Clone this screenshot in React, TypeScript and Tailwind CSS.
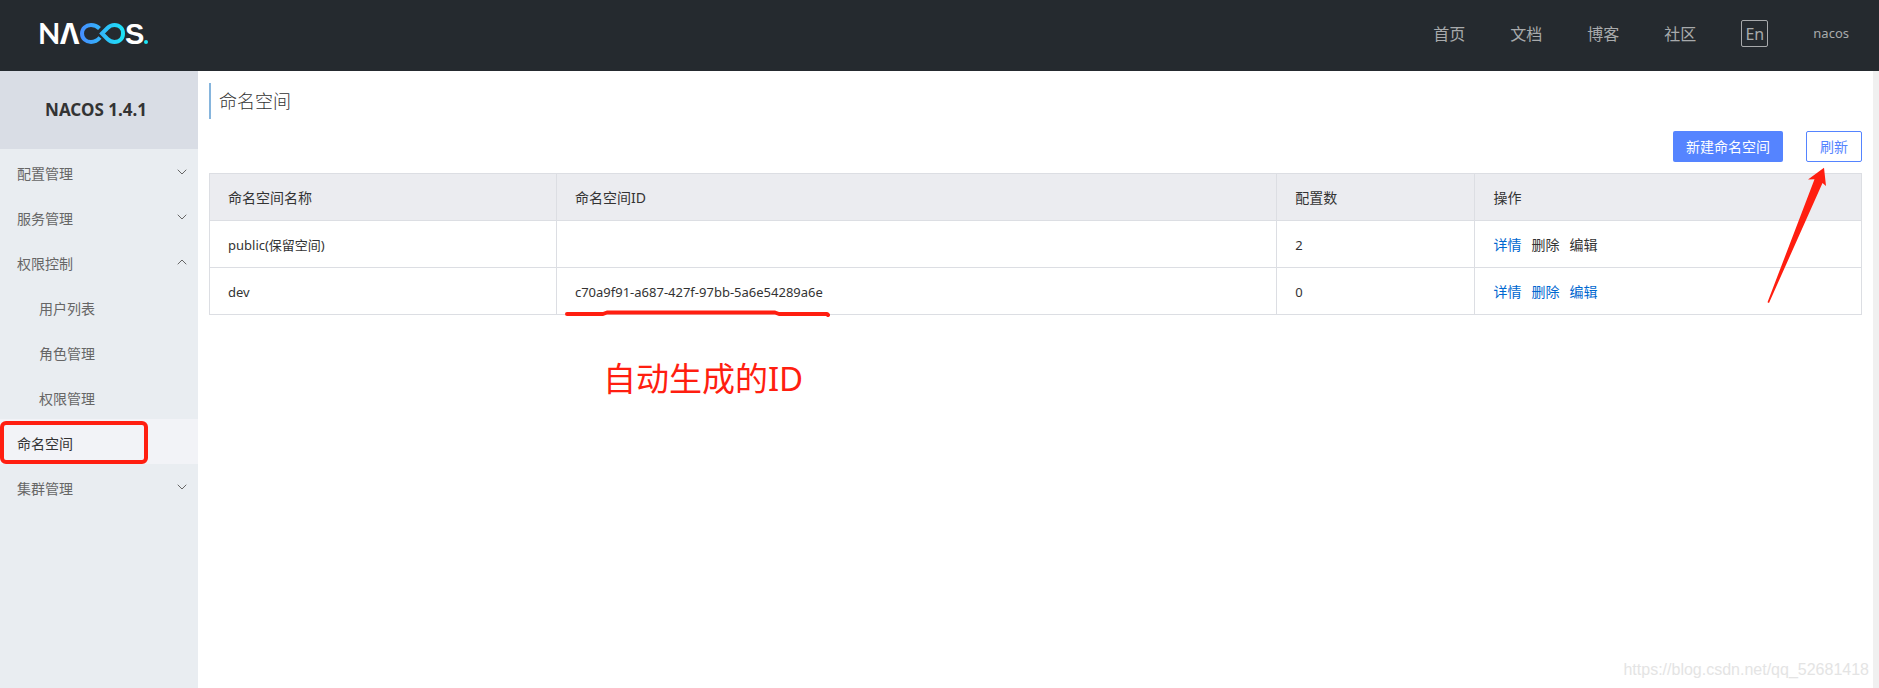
import { ChevronDown, ChevronUp } from "lucide-react";

type MenuItem = {
  name: string;
  open?: boolean;
  active?: boolean;
  leaf?: boolean;
  children?: string[];
};

const NAV_LINKS = ["首页", "文档", "博客", "社区"];

const MENU: MenuItem[] = [
  { name: "配置管理" },
  { name: "服务管理" },
  { name: "权限控制", open: true, children: ["用户列表", "角色管理", "权限管理"] },
  { name: "命名空间", leaf: true, active: true },
  { name: "集群管理" },
];

const NAMESPACES = [
  { name: "public(保留空间)", id: "", count: 2, reserved: true },
  { name: "dev", id: "c70a9f91-a687-427f-97bb-5a6e54289a6e", count: 0, reserved: false },
];

function Logo() {
  return (
    <svg width="116" height="48" viewBox="-4 -12 116 48" role="img" aria-label="NACOS">
      <defs>
        <linearGradient id="loop" gradientUnits="userSpaceOnUse" x1="40" y1="0" x2="85" y2="0">
          <stop offset="0" stopColor="#468cff" />
          <stop offset="1" stopColor="#1be5f6" />
        </linearGradient>
      </defs>
      <g fill="#fff" fontSize="29" fontWeight="700" fontFamily="Lato, sans-serif">
        <text x="-2" y="22">N</text>
        <text x="20" y="22" fontFamily="'Noto Sans', sans-serif">Λ</text>
        <text x="85" y="22" fontFamily="'Liberation Sans', sans-serif">S</text>
      </g>
      <g fill="none" stroke="url(#loop)" strokeWidth="4">
        <path d="M59.5 6.500C57 4 54.500 3 51 3C46 3 42 6.500 42 11.500S46 20 51 20C54.500 20 57 19 60 15.500" />
        <path d="M62 11.500L67.500 6C69.500 4 71.500 3 74.500 3C79.500 3 83 6.500 83 11.500S79.500 20 74.500 20C71.500 20 69.500 19 67.500 17Z" />
      </g>
      <circle cx="106" cy="20" r="2" fill="#1be5f6" />
    </svg>
  );
}

function Header() {
  return (
    <header className="flex h-[71px] items-center justify-between bg-[#252a2f] pr-[30px] pl-9">
      <a href="#" className="-mt-1">
        <Logo />
      </a>
      <nav className="-mt-1 flex items-center gap-[45px] text-base text-[#a8aaac]">
        {NAV_LINKS.map((link) => (
          <a key={link} href="#">
            {link}
          </a>
        ))}
        <button className="h-[27px] w-[27px] rounded-xs border border-[#a8aaac] leading-6">En</button>
        <a href="#" className="text-[13px]">
          nacos
        </a>
      </nav>
    </header>
  );
}

function Sidebar() {
  return (
    <aside className="w-[198px] shrink-0 bg-[#e9edf1] text-sm text-[#666]">
      <h1 className="flex h-[78px] items-center justify-center bg-[#d9dde5] pr-1.5 text-[17px] font-bold text-[#333]">
        NACOS 1.4.1
      </h1>
      <ul>
        {MENU.map((item) => (
          <li key={item.name}>
            <div className={item.active ? "relative bg-[#f2f3f7] text-[#333]" : "relative"}>
              <button className="flex h-[45px] w-full items-center justify-between pr-2 pl-[17px]">
                <span className="pt-1">{item.name}</span>
                {!item.leaf &&
                  (item.open ? (
                    <ChevronUp size={16} strokeWidth={1.5} />
                  ) : (
                    <ChevronDown size={16} strokeWidth={1.5} />
                  ))}
              </button>
              {item.active && (
                <div className="absolute top-0.5 left-0 h-[43px] w-[148px] rounded-md border-4 border-[#ff1e10]" />
              )}
            </div>
            {item.children?.map((child) => (
              <a key={child} href="#" className="flex h-[45px] items-center pt-1 pl-[39px]">
                {child}
              </a>
            ))}
          </li>
        ))}
      </ul>
    </aside>
  );
}

function NamespaceTable() {
  const cell = "h-[47px] border border-[#dcdee3] px-[18px] pt-0.5 text-left font-normal";

  return (
    <table className="w-full table-fixed border-collapse text-sm text-[#333]">
      <thead className="bg-[#ebecf0]">
        <tr>
          <th className={`${cell} w-[21%]`}>命名空间名称</th>
          <th className={`${cell} w-[43.6%]`}>命名空间ID</th>
          <th className={`${cell} w-[12%]`}>配置数</th>
          <th className={cell}>操作</th>
        </tr>
      </thead>
      <tbody className="text-[13px]">
        {NAMESPACES.map((ns) => (
          <tr key={ns.name}>
            <td className={cell}>{ns.name}</td>
            <td className={cell}>
              {ns.id && (
                <span className="relative inline-block">
                  {ns.id}
                  <svg className="absolute top-6 -left-2.5" width="266" height="10" viewBox="0 0 266 10" fill="none">
                    <path
                      d="M2 7H38L42 5.500H210L214 7H262L263 8"
                      stroke="#ff1e10"
                      strokeWidth="4"
                      strokeLinecap="round"
                      strokeLinejoin="round"
                    />
                  </svg>
                  <span className="absolute top-[72px] left-7 text-[33px] leading-[48px] whitespace-nowrap text-[#ff1e10]">
                    自动生成的ID
                  </span>
                </span>
              )}
            </td>
            <td className={cell}>{ns.count}</td>
            <td className={cell}>
              <div className="flex gap-2.5 text-sm">
                <a href="#" className="text-[#0068d0]">
                  详情
                </a>
                <a href="#" className={ns.reserved ? "text-[#333]" : "text-[#0068d0]"}>
                  删除
                </a>
                <a href="#" className={ns.reserved ? "text-[#333]" : "text-[#0068d0]"}>
                  编辑
                </a>
              </div>
            </td>
          </tr>
        ))}
      </tbody>
    </table>
  );
}

export default function App() {
  return (
    <div className="flex min-h-screen flex-col bg-white font-['Noto_Sans','Noto_Sans_CJK_SC',sans-serif]">
      <Header />
      <div className="flex flex-1">
        <Sidebar />
        <main className="relative flex-1 border-r-6 border-[#f0f0f0] px-[11px] pt-3">
          <h2 className="h-9 border-l-2 border-[#86b5dd] pl-2 text-lg leading-9 font-light text-[#333]">命名空间</h2>
          <div className="flex justify-end gap-[23px] pt-3 pb-[11px] text-sm">
            <button className="h-[31px] rounded-xs bg-[#5584ff] px-[13px] text-white">新建命名空间</button>
            <div className="relative">
              <button className="h-[31px] rounded-xs border border-[#5584ff] px-[13px] text-[#5584ff]">刷新</button>
              <svg className="absolute top-9 -left-10" width="62" height="138" viewBox="0 0 62 138" fill="#ff1e10">
                <path d="M58 0.700L60 19L56.500 16L3 136L1.500 135.300L48.500 12.300L42 12.500Z" />
              </svg>
            </div>
          </div>
          <NamespaceTable />
          <p className="absolute right-1 bottom-1.5 font-['Liberation_Sans',sans-serif] text-base text-[#e4e4e4]">
            https://blog.csdn.net/qq_52681418
          </p>
        </main>
      </div>
    </div>
  );
}
